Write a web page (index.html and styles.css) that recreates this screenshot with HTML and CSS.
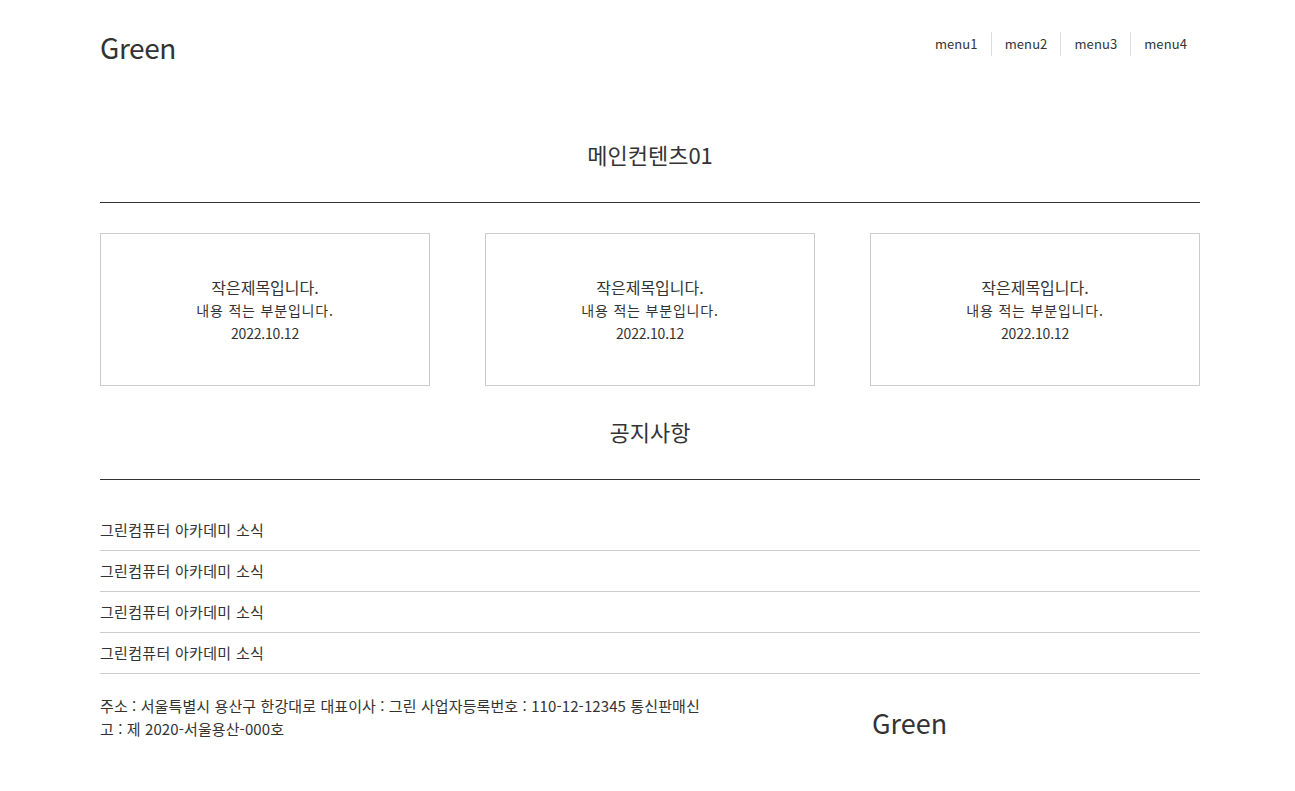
FILE: index.html
```html
<!DOCTYPE html>
<html lang="ko">
<head>
<meta charset="utf-8">
<title>Green</title>
<link rel="stylesheet" href="styles.css">
</head>
<body>
<div class="wrap">
  <header class="header">
    <h1 class="logo">Green</h1>
    <nav>
      <ul class="menu">
        <li><a href="#">menu1</a></li>
        <li><a href="#">menu2</a></li>
        <li><a href="#">menu3</a></li>
        <li><a href="#">menu4</a></li>
      </ul>
    </nav>
  </header>

  <section class="section">
    <h2 class="section-title">메인컨텐츠01</h2>
    <div class="cards">
      <div class="card">
        <p class="card-title">작은제목입니다.</p>
        <p class="card-text">내용 적는 부분입니다.</p>
        <p class="card-date">2022.10.12</p>
      </div>
      <div class="card">
        <p class="card-title">작은제목입니다.</p>
        <p class="card-text">내용 적는 부분입니다.</p>
        <p class="card-date">2022.10.12</p>
      </div>
      <div class="card">
        <p class="card-title">작은제목입니다.</p>
        <p class="card-text">내용 적는 부분입니다.</p>
        <p class="card-date">2022.10.12</p>
      </div>
    </div>
  </section>

  <section class="section notice">
    <h2 class="section-title">공지사항</h2>
    <ul class="notice-list">
      <li>그린컴퓨터 아카데미 소식</li>
      <li>그린컴퓨터 아카데미 소식</li>
      <li>그린컴퓨터 아카데미 소식</li>
      <li>그린컴퓨터 아카데미 소식</li>
    </ul>
  </section>

  <footer class="footer">
    <p class="address">주소 : 서울특별시 용산구 한강대로 대표이사 : 그린 사업자등록번호 : 110-12-12345 통신판매신고 : 제 2020-서울용산-000호</p>
    <div class="footer-logo">Green</div>
  </footer>
</div>
</body>
</html>
```

FILE: styles.css
```css
* { box-sizing: border-box; margin: 0; padding: 0; }
body {
  font-family: "Noto Sans CJK KR", "Noto Sans", sans-serif;
  color: #333;
  background: #fff;
}
ul { list-style: none; }
a { color: inherit; text-decoration: none; }

.wrap {
  width: 1100px;
  margin: 0 0 0 100px;
}

.header {
  display: flex;
  justify-content: space-between;
  align-items: flex-start;
  padding-top: 27px;
}
.logo {
  font-size: 28px;
  font-weight: 400;
  line-height: 40px;
  letter-spacing: -0.4px;
}
.menu {
  display: flex;
  margin-top: 5px;
}
.menu li {
  font-size: 13px;
  line-height: 24px;
  padding: 0 13px;
  letter-spacing: 0.1px;
  border-left: 1px solid #ddd;
}
.menu li:first-child { border-left: 0; }

.section-title {
  font-size: 22px;
  font-weight: 400;
  line-height: 30px;
  text-align: center;
  margin-top: 72px;
  padding-bottom: 33px;
  border-bottom: 1px solid #333;
}
.notice .section-title { margin-top: 30px; padding-bottom: 33px; }

.cards {
  display: grid;
  grid-template-columns: repeat(3, 330px);
  column-gap: 55px;
  margin-top: 30px;
}
.card {
  height: 153px;
  border: 1px solid #ccc;
  display: flex;
  flex-direction: column;
  justify-content: center;
  align-items: center;
  padding-top: 1px;
}
.card-title { font-size: 16px; line-height: 24px; }
.card-text { font-size: 14px; line-height: 23px; letter-spacing: 0.8px; }
.card-date { font-size: 14px; line-height: 23px; letter-spacing: -0.2px; }

.notice-list { margin-top: 30px; }
.notice-list li {
  font-size: 15px;
  line-height: 40px;
  letter-spacing: 0.3px;
  border-bottom: 1px solid #ccc;
}

.footer {
  display: flex;
  padding-top: 20px;
}
.address {
  width: 607px;
  font-size: 15px;
  line-height: 23px;
  letter-spacing: 0.1px;
}
.footer-logo {
  margin-left: 165px;
  margin-top: 11px;
  font-size: 27px;
  line-height: 36px;
}
```
